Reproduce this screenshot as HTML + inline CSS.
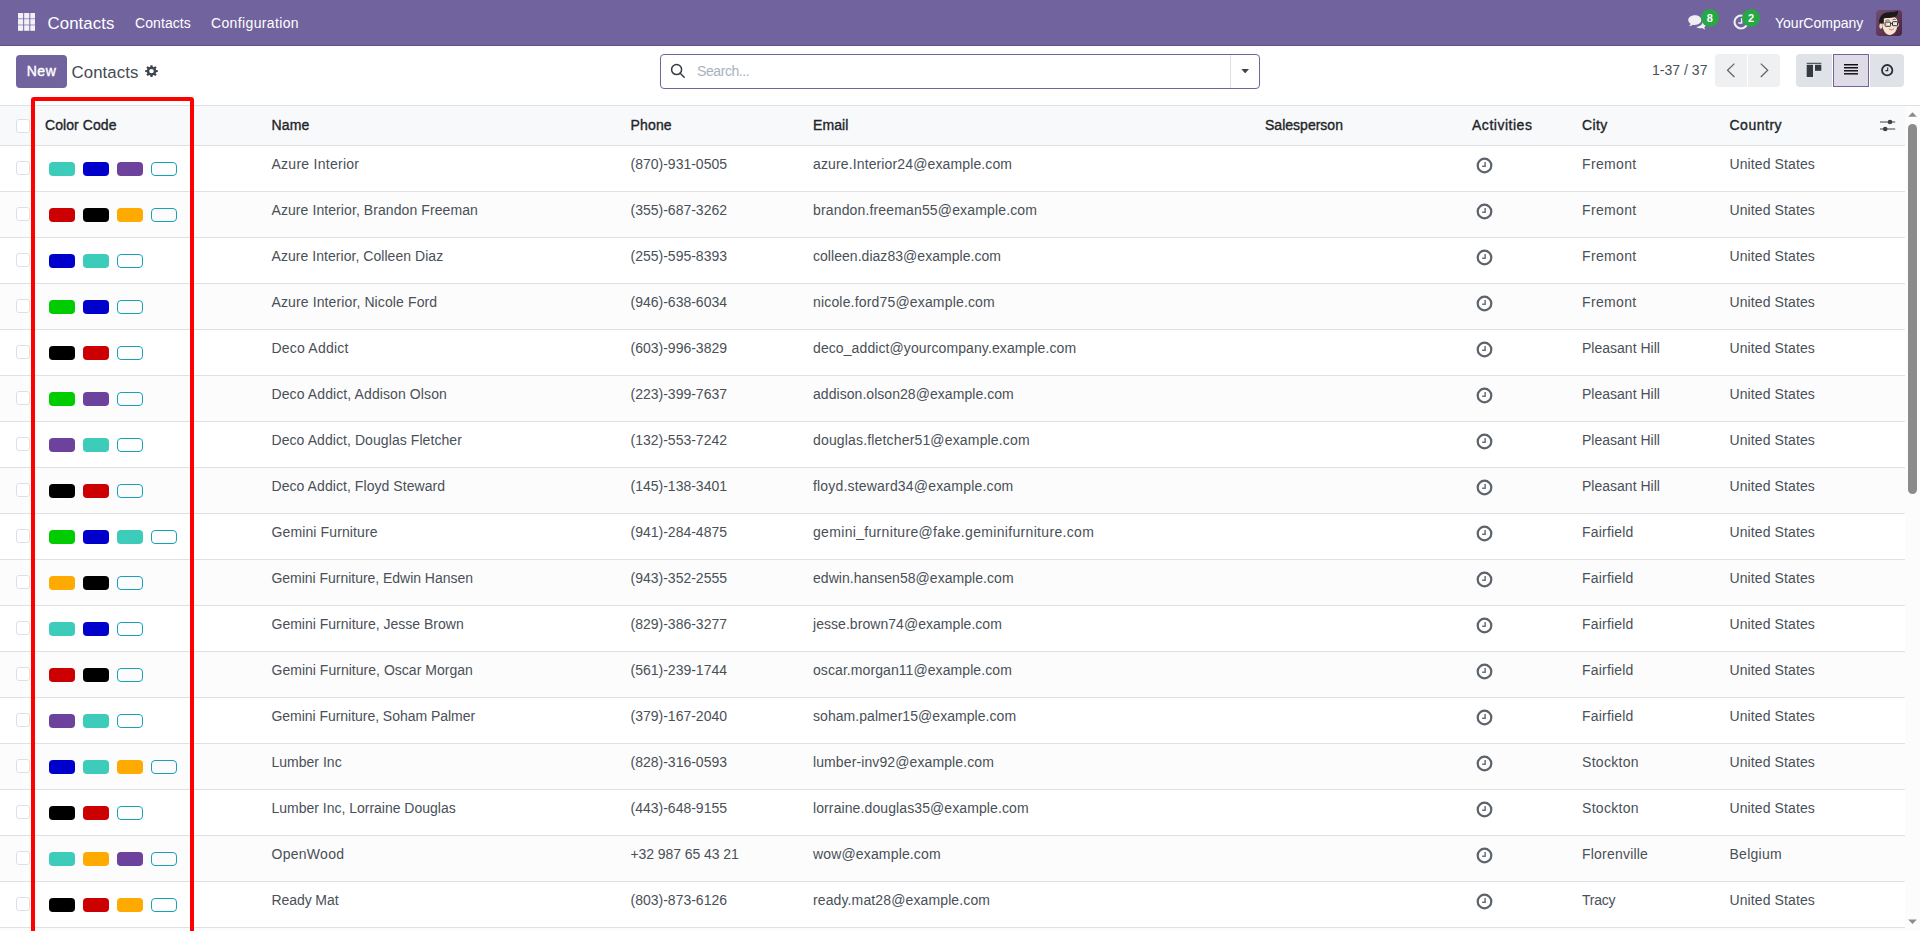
<!DOCTYPE html>
<html lang="en"><head><meta charset="utf-8"><title>Odoo - Contacts</title>
<style>
*{box-sizing:border-box}
html,body{margin:0;padding:0}
body{width:1920px;height:931px;overflow:hidden;position:relative;background:#fff;font-family:"Liberation Sans",sans-serif;font-size:14px;color:#495057}
.nav{position:absolute;left:0;top:0;width:1920px;height:46px;background:#71639e;border-bottom:1px solid #5d5185;color:#fff}
.nav span,.nav svg,.nav div{position:absolute}
.nav .apps{left:17.8px;top:13.1px;width:17.5px;height:17.8px}
.nav .brand{left:47.5px;top:12.2px;font-size:16.8px;line-height:24px}
.nav .m1{left:135px;top:12.8px;font-size:14px;line-height:21px}
.nav .m2{left:211px;top:12.8px;font-size:14px;line-height:21px}
.nav .chat{left:1688px;top:14.8px;width:18.5px;height:16.4px}
.nav .clk{left:1733px;top:14.2px;width:16px;height:16px}
.nav .bdg{width:18.6px;height:18.6px;border-radius:10px;background:#28a745;color:#fff;font-size:11px;line-height:18px;text-align:center;font-weight:700;top:8.6px}
.nav .b1{left:1700.6px}
.nav .b2{left:1741.7px}
.nav .comp{left:1775px;top:12.8px;font-size:14px;line-height:21px}
.nav .av{left:1876px;top:10px;width:26px;height:26px;border-radius:3px}
.cp{position:absolute;left:0;top:46px;width:1920px;height:59px;background:#fff}
.cp>*{position:absolute}
.new{left:16px;top:9px;width:51px;height:33px;background:#71639e;border-radius:4px;color:#fff;font-weight:400;-webkit-text-stroke:0.4px #fff;font-size:14px;line-height:33.2px;text-align:center;white-space:nowrap}
.bc{left:71.5px;top:14px;font-size:16.8px;line-height:26px;color:#444b52}
.gear{left:145px;top:19px;width:13px;height:12.2px}
.srch{left:660px;top:8px;width:600px;height:35px;border:1px solid #71639e;border-radius:4px;background:#fff}
.srch>*{position:absolute}
.srch .mag{left:8px;top:7px;width:18px;height:18px}
.srch .ph2{left:36px;top:6px;font-size:14px;line-height:21px;color:#a8b2bd}
.srch .sep{left:569px;top:0;width:1px;height:33px;background:#dcdfe3}
.srch .car{left:579.8px;top:13.8px;width:8.4px;height:4.7px}
.pg{left:1652px;top:14px;font-size:14px;line-height:21px;color:#495057}
.pb{top:8px;width:32px;height:33px;background:#eff0f2}
.pb.l{left:1715px;border-radius:4px 0 0 4px}
.pb.r2{left:1748px;border-radius:0 4px 4px 0}
.pb svg{position:absolute;left:11px;top:9px;width:10px;height:15px}
.vb{top:8px;height:33px;background:#dfe2e6}
.vb.k{left:1796px;width:36px;border-radius:4px 0 0 4px}
.vb.li{left:1833px;width:36px;background:#dfdce8;border:1px solid #71639e}
.vb.a{left:1870px;width:34px;border-radius:0 4px 4px 0}
.vb svg{position:absolute}
.tbl{position:absolute;left:0;top:106px;width:1905px}
.tl{position:absolute;left:0;top:105px;width:1920px;height:1px;background:#dee2e6}
.hd,.r{position:relative;width:1905px;height:46px;border-bottom:1px solid #dee2e6}
.hd{height:40px;background:#f8f9fa;font-weight:400;color:#212529;-webkit-text-stroke:0.35px #212529}
.r.e{background:#fcfcfc}
.c,.h{position:absolute;top:7.75px;line-height:21px;white-space:nowrap}
.h{top:8.75px}
.cb{position:absolute;left:16px;top:15px;width:14px;height:14px;border:1px solid #dce0e6;border-radius:3px;background:#fff}
.hd .cb{top:13px}
.cc{left:49px;top:16px;height:14px;line-height:0;letter-spacing:0}
.p{display:inline-block;width:26px;height:14px;border-radius:4px;margin-right:8px}
.teal{background:#3dccba}.blue{background:#0000cc}.purple{background:#6c429d}.red{background:#cc0000}.black{background:#000}.orange{background:#ffaa00}.green{background:#00cc00}
.o{border:1px solid #17a2b8;background:transparent}
.nm{left:271.5px}.ph{left:630.5px}.em{left:813px}.sp{left:1265px}.ac{left:1476px;top:11px}.ci{left:1582px}.co{left:1729.5px}
.h.cch{left:45px}.h.ach{left:1472px}
.act{width:17px;height:17px;display:block}
.opt{position:absolute;left:1879px;top:10.5px;width:17px;height:16px}
.hl{position:absolute;left:31px;top:97px;width:163px;height:850px;border:4px solid #ff0000;border-radius:3px}
.sb{position:absolute;left:1905px;top:106px;width:15px;height:825px;background:#fcfcfc}
.sb .up{position:absolute;left:3px;top:5.8px;width:9px;height:5.2px}
.sb .dn{position:absolute;left:3px;top:812.6px;width:9px;height:5.2px}
.sb .th{position:absolute;left:3px;top:18px;width:9px;height:370px;border-radius:5px;background:#8b8b8b}
</style></head>
<body>
<div class="nav">
<svg class="apps" viewBox="0 0 17.5 17.8"><g fill="#f3f1f7"><rect x="0" y="0" width="5.200" height="5.500"/><rect x="6.15" y="0" width="5.200" height="5.500"/><rect x="12.3" y="0" width="5.200" height="5.500"/><rect x="0" y="6.15" width="5.200" height="5.500"/><rect x="6.15" y="6.15" width="5.200" height="5.500"/><rect x="12.3" y="6.15" width="5.200" height="5.500"/><rect x="0" y="12.3" width="5.200" height="5.500"/><rect x="6.15" y="12.3" width="5.200" height="5.500"/><rect x="12.3" y="12.3" width="5.200" height="5.500"/></g></svg>
<span class="brand" style="letter-spacing:0.102px">Contacts</span>
<span class="m1" style="letter-spacing:0.086px">Contacts</span>
<span class="m2" style="letter-spacing:0.363px">Configuration</span>
<svg class="chat" viewBox="0 0 18 16"><g fill="#f1eff6"><path d="M6.6 0.2C3 0.2 0.2 2.3 0.2 4.9c0 1.5 0.9 2.8 2.3 3.7C2.3 9.4 1.8 10.2 1 10.9c1.500 -0.100 2.800 -0.600 3.700 -1.400c0.600 0.100 1.200 0.200 1.900 0.200c3.600 0 6.400 -2.100 6.400 -4.800S10.200 0.200 6.600 0.200z"/><path d="M14.300 6.500c0 2.600 -2.700 4.700 -6.300 5.100c1 0.900 2.500 1.400 4.200 1.400c0.500 0 1.100 -0.100 1.600 -0.200c0.900 0.800 2.100 1.300 3.400 1.400c-0.700 -0.600 -1.200 -1.400 -1.400 -2.200c1.200 -0.800 2 -1.900 2 -3.200c0 -1.600 -1.300 -3 -3.300 -3.700c0 0.500 -0.200 0.900 -0.200 1.400z"/></g></svg>
<div class="bdg b1">8</div>
<svg class="clk" viewBox="0 0 17 17"><circle cx="8.500" cy="8.500" r="6.900" fill="none" stroke="#f1eff6" stroke-width="2.200"/><path d="M9.200 4.400v5.200H5.600" fill="none" stroke="#f1eff6" stroke-width="1.600"/></svg>
<div class="bdg b2">2</div>
<span class="comp" style="letter-spacing:0.015px">YourCompany</span>
<svg class="av" viewBox="0 0 26 26"><defs><linearGradient id="ag" x1="0" y1="0" x2="1" y2="1"><stop offset="0" stop-color="#734f70"/><stop offset="1" stop-color="#4a223b"/></linearGradient><clipPath id="ac"><rect width="26" height="26" rx="3.200"/></clipPath></defs><g clip-path="url(#ac)"><rect width="26" height="26" fill="url(#ag)"/><ellipse cx="4.900" cy="16.200" rx="1.500" ry="2.800" fill="#f4d9c6"/><ellipse cx="21.800" cy="14.800" rx="1" ry="2" fill="#efccb7"/><path d="M6.200 12.500C6.200 8 9 6.300 14 6.300s7.600 2.200 7.600 6.700c0 6.500 -3.600 12 -7.900 12S6.200 19.500 6.200 12.500z" fill="#fbe4d1"/><path d="M17.500 24c2.500 -2 4 -6 4.100 -10.500c-0.600 4 -2 8 -4.100 10.500z" fill="#f2cdb6"/><path d="M3.200 13.600C2.400 7 6.500 2.200 13 2.200c3 0 5.600 -0.100 8.800 -1.400c0.700 3.200 -0.700 5.500 -3.700 6.500c-3.500 1.100 -6.900 0.200 -10.300 1.300c0.200 2.300 0.200 4.200 -0.500 6c-0.800 -1.500 -2.300 -1.900 -4.100 -1z" fill="#1b1b1b"/><path d="M9.400 10.600q2 -1.100 4.200 -0.300M16.600 9.700q1.600 -0.900 3.200 -0.100" fill="none" stroke="#3a2a25" stroke-width="0.700"/><rect x="9.100" y="12.100" width="5.500" height="4.200" rx="0.600" fill="#f1efe9" stroke="#2d2d2d" stroke-width="1"/><rect x="16.500" y="11.700" width="5" height="4" rx="0.600" fill="#f1efe9" stroke="#2d2d2d" stroke-width="1"/><path d="M14.600 13.400h1.900" stroke="#2d2d2d" stroke-width="0.900"/><path d="M10.300 15.300l1.300 -2.200M17.600 14.800l1.200 -2" stroke="#c9c9c4" stroke-width="0.700"/><path d="M12.900 19.100q2.600 1.100 5.100 -0.300q-1.900 2.800 -5.100 0.300z" fill="#fff" stroke="#a5636b" stroke-width="0.450"/><path d="M14.800 17.300q0.800 0.500 1.600 0" fill="none" stroke="#e3a99a" stroke-width="0.500"/></g></svg>
</div>
<div class="cp">
<div class="new"><span class="nt" style="letter-spacing:0.563px">New</span></div>
<span class="bc" style="letter-spacing:0.102px">Contacts</span>
<svg class="gear" viewBox="0 0 14 14" preserveAspectRatio="none"><path fill="#3d444b" fill-rule="evenodd" d="M5.69 2.07L5.90 0.19L8.10 0.19L8.31 2.07L9.56 2.59L11.04 1.41L12.59 2.96L11.41 4.44L11.93 5.69L13.81 5.90L13.81 8.10L11.93 8.31L11.41 9.56L12.59 11.04L11.04 12.59L9.56 11.41L8.31 11.93L8.10 13.81L5.90 13.81L5.69 11.93L4.44 11.41L2.96 12.59L1.41 11.04L2.59 9.56L2.07 8.31L0.19 8.10L0.19 5.90L2.07 5.69L2.59 4.44L1.41 2.96L2.96 1.41L4.44 2.59zM7.00 4.50a2.5 2.5 0 1 0 0 5.0a2.5 2.5 0 1 0 0 -5.0z"/></svg>
<div class="srch"><svg class="mag" viewBox="0 0 18 18"><circle cx="7.600" cy="7.600" r="5" fill="none" stroke="#343a40" stroke-width="1.500"/><path d="M11.200 11.300l4 4" stroke="#343a40" stroke-width="1.400" stroke-linecap="round"/></svg><span class="ph2" style="letter-spacing:-0.416px">Search...</span><span class="sep"></span><svg class="car" viewBox="0 0 10 6"><path d="M0 0h10L5 5.600z" fill="#3d444b"/></svg></div>
<span class="pg" style="letter-spacing:0.02px">1-37 / 37</span>
<div class="pb l"><svg viewBox="0 0 10 15"><path d="M8.400 0.600L1.500 7.300L8.400 14" fill="none" stroke="#5f656b" stroke-width="1.250"/></svg></div>
<div class="pb r2"><svg viewBox="0 0 10 15"><path d="M1.800 0.600l6.900 6.700L1.800 14" fill="none" stroke="#5f656b" stroke-width="1.250"/></svg></div>
<div class="vb k"><svg style="left:10px;top:8px;width:16px;height:16px" viewBox="0 0 16 16"><g fill="#343a40"><rect x="0.700" y="0.800" width="14.600" height="1"/><rect x="0.700" y="2.800" width="6.300" height="12.200"/><rect x="9" y="2.800" width="6.300" height="6"/></g></svg></div>
<div class="vb li"><svg style="left:9.75px;top:9.25px;width:14.4px;height:10.6px" viewBox="0 0 14.4 10.6"><g fill="#0e0e12"><rect x="0" y="0" width="14.400" height="1.450"/><rect x="0" y="3.030" width="14.400" height="1.450"/><rect x="0" y="6.060" width="14.400" height="1.450"/><rect x="0" y="9.090" width="14.400" height="1.450"/></g></svg></div>
<div class="vb a"><svg style="left:9.8px;top:8.5px;width:14.4px;height:14.4px" viewBox="0 0 15 15"><circle cx="7.500" cy="7.500" r="5.400" fill="none" stroke="#2b3036" stroke-width="1.900"/><path d="M8 4.600v3.400H5.600" fill="none" stroke="#2b3036" stroke-width="1.200"/></svg></div>
</div>
<div class="tl"></div>
<div class="tbl">
<div class="hd"><b class="cb"></b><span class="h cch" style="letter-spacing:0.072px">Color Code</span><span class="h nm" style="letter-spacing:0.132px">Name</span><span class="h ph" style="letter-spacing:0.167px">Phone</span><span class="h em" style="letter-spacing:0.064px">Email</span><span class="h sp" style="letter-spacing:0.012px">Salesperson</span><span class="h ach" style="letter-spacing:0.519px">Activities</span><span class="h ci" style="letter-spacing:0.405px">City</span><span class="h co" style="letter-spacing:0.505px">Country</span><svg class="opt" viewBox="0 0 17 16"><g stroke="#3d444b" stroke-width="1" fill="#3d444b"><path d="M1 5h15.200M1 12h15.200"/><circle cx="11" cy="5" r="2.300" stroke="none"/><circle cx="6.200" cy="12" r="2.300" stroke="none"/></g></svg></div>

<div class="r"><b class="cb"></b><span class="c cc"><i class="p teal"></i><i class="p blue"></i><i class="p purple"></i><i class="p o"></i></span><span class="c nm" style="letter-spacing:0.265px">Azure Interior</span><span class="c ph">(870)-931-0505</span><span class="c em" style="letter-spacing:0.13px">azure.Interior24@example.com</span><span class="c ac"><svg class="act" viewBox="0 0 16 16"><circle cx="8" cy="8" r="6.400" fill="none" stroke="#5c636a" stroke-width="2.100"/><path d="M8.600 4.600v4H5.800" fill="none" stroke="#6a7178" stroke-width="1.400"/></svg></span><span class="c ci" style="letter-spacing:0.353px">Fremont</span><span class="c co" style="letter-spacing:0.108px">United States</span></div>
<div class="r e"><b class="cb"></b><span class="c cc"><i class="p red"></i><i class="p black"></i><i class="p orange"></i><i class="p o"></i></span><span class="c nm" style="letter-spacing:0.08px">Azure Interior, Brandon Freeman</span><span class="c ph">(355)-687-3262</span><span class="c em" style="letter-spacing:0.153px">brandon.freeman55@example.com</span><span class="c ac"><svg class="act" viewBox="0 0 16 16"><circle cx="8" cy="8" r="6.400" fill="none" stroke="#5c636a" stroke-width="2.100"/><path d="M8.600 4.600v4H5.800" fill="none" stroke="#6a7178" stroke-width="1.400"/></svg></span><span class="c ci" style="letter-spacing:0.353px">Fremont</span><span class="c co" style="letter-spacing:0.108px">United States</span></div>
<div class="r"><b class="cb"></b><span class="c cc"><i class="p blue"></i><i class="p teal"></i><i class="p o"></i></span><span class="c nm" style="letter-spacing:0.046px">Azure Interior, Colleen Diaz</span><span class="c ph">(255)-595-8393</span><span class="c em" style="letter-spacing:0.039px">colleen.diaz83@example.com</span><span class="c ac"><svg class="act" viewBox="0 0 16 16"><circle cx="8" cy="8" r="6.400" fill="none" stroke="#5c636a" stroke-width="2.100"/><path d="M8.600 4.600v4H5.800" fill="none" stroke="#6a7178" stroke-width="1.400"/></svg></span><span class="c ci" style="letter-spacing:0.353px">Fremont</span><span class="c co" style="letter-spacing:0.108px">United States</span></div>
<div class="r e"><b class="cb"></b><span class="c cc"><i class="p green"></i><i class="p blue"></i><i class="p o"></i></span><span class="c nm" style="letter-spacing:0.116px">Azure Interior, Nicole Ford</span><span class="c ph">(946)-638-6034</span><span class="c em" style="letter-spacing:0.171px">nicole.ford75@example.com</span><span class="c ac"><svg class="act" viewBox="0 0 16 16"><circle cx="8" cy="8" r="6.400" fill="none" stroke="#5c636a" stroke-width="2.100"/><path d="M8.600 4.600v4H5.800" fill="none" stroke="#6a7178" stroke-width="1.400"/></svg></span><span class="c ci" style="letter-spacing:0.353px">Fremont</span><span class="c co" style="letter-spacing:0.108px">United States</span></div>
<div class="r"><b class="cb"></b><span class="c cc"><i class="p black"></i><i class="p red"></i><i class="p o"></i></span><span class="c nm" style="letter-spacing:0.21px">Deco Addict</span><span class="c ph">(603)-996-3829</span><span class="c em" style="letter-spacing:0.096px">deco_addict@yourcompany.example.com</span><span class="c ac"><svg class="act" viewBox="0 0 16 16"><circle cx="8" cy="8" r="6.400" fill="none" stroke="#5c636a" stroke-width="2.100"/><path d="M8.600 4.600v4H5.800" fill="none" stroke="#6a7178" stroke-width="1.400"/></svg></span><span class="c ci" style="letter-spacing:0.006px">Pleasant Hill</span><span class="c co" style="letter-spacing:0.108px">United States</span></div>
<div class="r e"><b class="cb"></b><span class="c cc"><i class="p green"></i><i class="p purple"></i><i class="p o"></i></span><span class="c nm" style="letter-spacing:0.103px">Deco Addict, Addison Olson</span><span class="c ph">(223)-399-7637</span><span class="c em" style="letter-spacing:0.049px">addison.olson28@example.com</span><span class="c ac"><svg class="act" viewBox="0 0 16 16"><circle cx="8" cy="8" r="6.400" fill="none" stroke="#5c636a" stroke-width="2.100"/><path d="M8.600 4.600v4H5.800" fill="none" stroke="#6a7178" stroke-width="1.400"/></svg></span><span class="c ci" style="letter-spacing:0.006px">Pleasant Hill</span><span class="c co" style="letter-spacing:0.108px">United States</span></div>
<div class="r"><b class="cb"></b><span class="c cc"><i class="p purple"></i><i class="p teal"></i><i class="p o"></i></span><span class="c nm" style="letter-spacing:0.073px">Deco Addict, Douglas Fletcher</span><span class="c ph">(132)-553-7242</span><span class="c em" style="letter-spacing:0.164px">douglas.fletcher51@example.com</span><span class="c ac"><svg class="act" viewBox="0 0 16 16"><circle cx="8" cy="8" r="6.400" fill="none" stroke="#5c636a" stroke-width="2.100"/><path d="M8.600 4.600v4H5.800" fill="none" stroke="#6a7178" stroke-width="1.400"/></svg></span><span class="c ci" style="letter-spacing:0.006px">Pleasant Hill</span><span class="c co" style="letter-spacing:0.108px">United States</span></div>
<div class="r e"><b class="cb"></b><span class="c cc"><i class="p black"></i><i class="p red"></i><i class="p o"></i></span><span class="c nm" style="letter-spacing:0.065px">Deco Addict, Floyd Steward</span><span class="c ph">(145)-138-3401</span><span class="c em" style="letter-spacing:0.183px">floyd.steward34@example.com</span><span class="c ac"><svg class="act" viewBox="0 0 16 16"><circle cx="8" cy="8" r="6.400" fill="none" stroke="#5c636a" stroke-width="2.100"/><path d="M8.600 4.600v4H5.800" fill="none" stroke="#6a7178" stroke-width="1.400"/></svg></span><span class="c ci" style="letter-spacing:0.006px">Pleasant Hill</span><span class="c co" style="letter-spacing:0.108px">United States</span></div>
<div class="r"><b class="cb"></b><span class="c cc"><i class="p green"></i><i class="p blue"></i><i class="p teal"></i><i class="p o"></i></span><span class="c nm" style="letter-spacing:0.122px">Gemini Furniture</span><span class="c ph">(941)-284-4875</span><span class="c em" style="letter-spacing:0.323px">gemini_furniture@fake.geminifurniture.com</span><span class="c ac"><svg class="act" viewBox="0 0 16 16"><circle cx="8" cy="8" r="6.400" fill="none" stroke="#5c636a" stroke-width="2.100"/><path d="M8.600 4.600v4H5.800" fill="none" stroke="#6a7178" stroke-width="1.400"/></svg></span><span class="c ci" style="letter-spacing:0.197px">Fairfield</span><span class="c co" style="letter-spacing:0.108px">United States</span></div>
<div class="r e"><b class="cb"></b><span class="c cc"><i class="p orange"></i><i class="p black"></i><i class="p o"></i></span><span class="c nm" style="letter-spacing:-0.03px">Gemini Furniture, Edwin Hansen</span><span class="c ph">(943)-352-2555</span><span class="c em" style="letter-spacing:0.045px">edwin.hansen58@example.com</span><span class="c ac"><svg class="act" viewBox="0 0 16 16"><circle cx="8" cy="8" r="6.400" fill="none" stroke="#5c636a" stroke-width="2.100"/><path d="M8.600 4.600v4H5.800" fill="none" stroke="#6a7178" stroke-width="1.400"/></svg></span><span class="c ci" style="letter-spacing:0.197px">Fairfield</span><span class="c co" style="letter-spacing:0.108px">United States</span></div>
<div class="r"><b class="cb"></b><span class="c cc"><i class="p teal"></i><i class="p blue"></i><i class="p o"></i></span><span class="c nm">Gemini Furniture, Jesse Brown</span><span class="c ph">(829)-386-3277</span><span class="c em" style="letter-spacing:0.047px">jesse.brown74@example.com</span><span class="c ac"><svg class="act" viewBox="0 0 16 16"><circle cx="8" cy="8" r="6.400" fill="none" stroke="#5c636a" stroke-width="2.100"/><path d="M8.600 4.600v4H5.800" fill="none" stroke="#6a7178" stroke-width="1.400"/></svg></span><span class="c ci" style="letter-spacing:0.197px">Fairfield</span><span class="c co" style="letter-spacing:0.108px">United States</span></div>
<div class="r e"><b class="cb"></b><span class="c cc"><i class="p red"></i><i class="p black"></i><i class="p o"></i></span><span class="c nm" style="letter-spacing:0.02px">Gemini Furniture, Oscar Morgan</span><span class="c ph">(561)-239-1744</span><span class="c em" style="letter-spacing:0.079px">oscar.morgan11@example.com</span><span class="c ac"><svg class="act" viewBox="0 0 16 16"><circle cx="8" cy="8" r="6.400" fill="none" stroke="#5c636a" stroke-width="2.100"/><path d="M8.600 4.600v4H5.800" fill="none" stroke="#6a7178" stroke-width="1.400"/></svg></span><span class="c ci" style="letter-spacing:0.197px">Fairfield</span><span class="c co" style="letter-spacing:0.108px">United States</span></div>
<div class="r"><b class="cb"></b><span class="c cc"><i class="p purple"></i><i class="p teal"></i><i class="p o"></i></span><span class="c nm" style="letter-spacing:-0.037px">Gemini Furniture, Soham Palmer</span><span class="c ph">(379)-167-2040</span><span class="c em" style="letter-spacing:0.055px">soham.palmer15@example.com</span><span class="c ac"><svg class="act" viewBox="0 0 16 16"><circle cx="8" cy="8" r="6.400" fill="none" stroke="#5c636a" stroke-width="2.100"/><path d="M8.600 4.600v4H5.800" fill="none" stroke="#6a7178" stroke-width="1.400"/></svg></span><span class="c ci" style="letter-spacing:0.197px">Fairfield</span><span class="c co" style="letter-spacing:0.108px">United States</span></div>
<div class="r e"><b class="cb"></b><span class="c cc"><i class="p blue"></i><i class="p teal"></i><i class="p orange"></i><i class="p o"></i></span><span class="c nm" style="letter-spacing:0.012px">Lumber Inc</span><span class="c ph">(828)-316-0593</span><span class="c em" style="letter-spacing:0.105px">lumber-inv92@example.com</span><span class="c ac"><svg class="act" viewBox="0 0 16 16"><circle cx="8" cy="8" r="6.400" fill="none" stroke="#5c636a" stroke-width="2.100"/><path d="M8.600 4.600v4H5.800" fill="none" stroke="#6a7178" stroke-width="1.400"/></svg></span><span class="c ci" style="letter-spacing:0.298px">Stockton</span><span class="c co" style="letter-spacing:0.108px">United States</span></div>
<div class="r"><b class="cb"></b><span class="c cc"><i class="p black"></i><i class="p red"></i><i class="p o"></i></span><span class="c nm" style="letter-spacing:-0.01px">Lumber Inc, Lorraine Douglas</span><span class="c ph">(443)-648-9155</span><span class="c em" style="letter-spacing:0.102px">lorraine.douglas35@example.com</span><span class="c ac"><svg class="act" viewBox="0 0 16 16"><circle cx="8" cy="8" r="6.400" fill="none" stroke="#5c636a" stroke-width="2.100"/><path d="M8.600 4.600v4H5.800" fill="none" stroke="#6a7178" stroke-width="1.400"/></svg></span><span class="c ci" style="letter-spacing:0.298px">Stockton</span><span class="c co" style="letter-spacing:0.108px">United States</span></div>
<div class="r e"><b class="cb"></b><span class="c cc"><i class="p teal"></i><i class="p orange"></i><i class="p purple"></i><i class="p o"></i></span><span class="c nm" style="letter-spacing:0.278px">OpenWood</span><span class="c ph" style="letter-spacing:-0.078px">+32 987 65 43 21</span><span class="c em" style="letter-spacing:0.154px">wow@example.com</span><span class="c ac"><svg class="act" viewBox="0 0 16 16"><circle cx="8" cy="8" r="6.400" fill="none" stroke="#5c636a" stroke-width="2.100"/><path d="M8.600 4.600v4H5.800" fill="none" stroke="#6a7178" stroke-width="1.400"/></svg></span><span class="c ci" style="letter-spacing:0.21px">Florenville</span><span class="c co" style="letter-spacing:0.258px">Belgium</span></div>
<div class="r"><b class="cb"></b><span class="c cc"><i class="p black"></i><i class="p red"></i><i class="p orange"></i><i class="p o"></i></span><span class="c nm" style="letter-spacing:-0.083px">Ready Mat</span><span class="c ph">(803)-873-6126</span><span class="c em" style="letter-spacing:0.125px">ready.mat28@example.com</span><span class="c ac"><svg class="act" viewBox="0 0 16 16"><circle cx="8" cy="8" r="6.400" fill="none" stroke="#5c636a" stroke-width="2.100"/><path d="M8.600 4.600v4H5.800" fill="none" stroke="#6a7178" stroke-width="1.400"/></svg></span><span class="c ci" style="letter-spacing:-0.267px">Tracy</span><span class="c co" style="letter-spacing:0.108px">United States</span></div>
<div class="r e"></div>
</div>
<div class="hl"></div>
<div class="sb"><svg class="up" viewBox="0 0 10 6"><path d="M0 5.5L5 0.3L10 5.5z" fill="#8b8b8b"/></svg><div class="th"></div><svg class="dn" viewBox="0 0 10 6"><path d="M0 0.5L5 5.7L10 0.5z" fill="#8b8b8b"/></svg></div>
</body></html>
